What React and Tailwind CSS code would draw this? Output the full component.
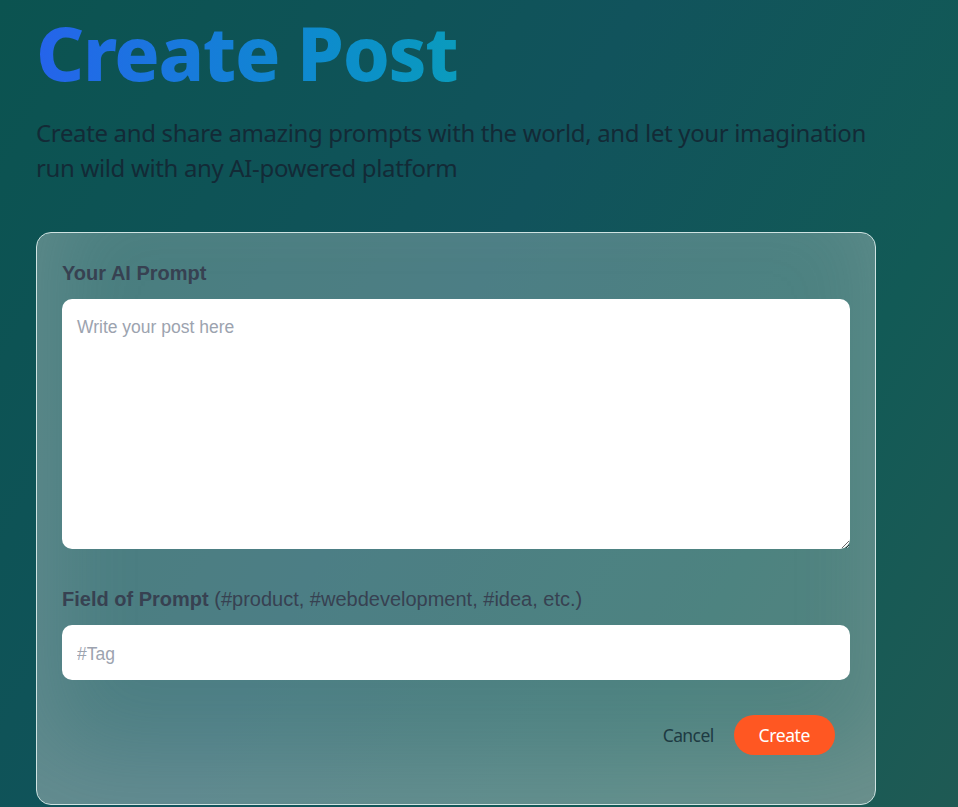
import React from "react";

export default function App() {
  return (
    <div className="min-h-screen w-full bg-[linear-gradient(120deg,#0b5350_0%,#11535c_45%,#125a56_75%,#1f5a54_100%)] overflow-hidden">
      <section className="pl-[36px] pt-[9px] flex flex-col items-start">
        <h1 className="text-[75px] leading-[1.15] font-extrabold tracking-[-1.4px] [font-family:'Noto_Sans',sans-serif] bg-gradient-to-r from-[#2563eb] to-[#0b9bbd] bg-clip-text text-transparent">
          Create Post
        </h1>
        <p className="mt-[20px] w-[850px] text-[24px] leading-[35px] tracking-[-0.35px] text-[#132a36] [font-family:'Noto_Sans',sans-serif]">
          Create and share amazing prompts with the world, and let your imagination run wild with any AI-powered platform
        </p>

        <form className="mt-[47px] w-[840px] flex flex-col gap-[35px] rounded-[15px] border border-[#cfe3e2] bg-white/25 shadow-[inset_10px_-50px_94px_0_rgba(199,199,199,0.2)] p-[25px]">
          <label className="flex flex-col">
            <span className="text-[20px] leading-[30px] font-bold text-[#374151] [font-family:'Liberation_Sans',Arial,sans-serif]">
              Your AI Prompt
            </span>
            <textarea
              placeholder="Write your post here"
              className="mt-[11px] w-full h-[250px] rounded-[10px] bg-white px-[15px] py-[16px] text-[17.5px] leading-[25px] text-gray-500 placeholder:text-[#9ca3af] outline-0 [font-family:'Liberation_Sans',Arial,sans-serif]"
            />
          </label>

          <label className="flex flex-col">
            <span className="text-[20px] leading-[30px] font-bold text-[#374151] [font-family:'Liberation_Sans',Arial,sans-serif]">
              Field of Prompt{" "}
              <span className="font-normal">(#product, #webdevelopment, #idea, etc.)</span>
            </span>
            <input
              type="text"
              placeholder="#Tag"
              className="mt-[11px] w-full h-[55px] rounded-[10px] bg-white px-[15px] pt-[3px] text-[17.5px] text-gray-500 placeholder:text-[#9ca3af] outline-0 [font-family:'Liberation_Sans',Arial,sans-serif]"
            />
          </label>

          <div className="flex items-center justify-end gap-[20px] mx-[15px] mb-[24px]">
            <button type="button" className="text-[17.5px] tracking-[-0.6px] text-[#1e3a42] [font-family:'Noto_Sans',sans-serif]">
              Cancel
            </button>
            <button type="button" className="h-[40px] px-[25px] rounded-full bg-[#ff5722] text-white text-[17.5px] tracking-[-0.4px] [font-family:'Noto_Sans',sans-serif]">
              Create
            </button>
          </div>
        </form>
      </section>
    </div>
  );
}
